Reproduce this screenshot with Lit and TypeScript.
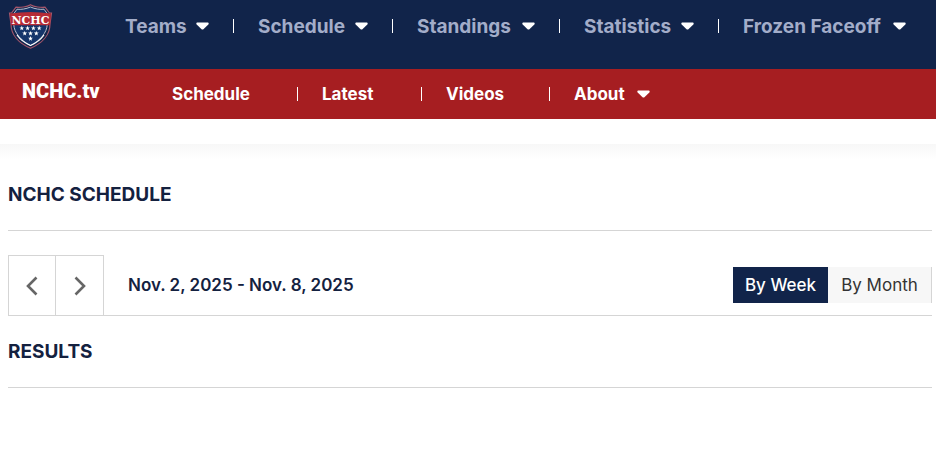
import { LitElement, html, css, svg, nothing } from "lit";
import { customElement, state } from "lit/decorators.js";

interface NavItem {
  label: string;
  menu: boolean;
}

const mainNav: NavItem[] = ["Teams", "Schedule", "Standings", "Statistics", "Frozen Faceoff"].map(
  (label) => ({ label, menu: true })
);

const tvNav: NavItem[] = [
  { label: "Schedule", menu: false },
  { label: "Latest", menu: false },
  { label: "Videos", menu: false },
  { label: "About", menu: true },
];

const caret = html`<svg class="caret" viewBox="0 0 13 8" aria-hidden="true">
  <path d="M1.6 0.4H11.4C12.7 0.4 13.1 1.6 12.3 2.4L7.7 6.9Q6.5 8 5.3 6.9L0.7 2.4C-0.1 1.6 0.3 0.4 1.6 0.4Z" fill="currentColor" />
</svg>`;

const stars: [number, number][] = [
  [13.8, 24.2], [19.6, 24.2], [25.4, 24.2], [31.2, 24.2],
  [16.7, 29.4], [22.5, 29.4], [28.3, 29.4],
  [22.5, 34.6],
];

const star = ([x, y]: [number, number]) => svg`<path
  transform="translate(${x} ${y})"
  d="M0 -2.5L0.7 -0.8H2.4L1 0.4L1.5 2.1L0 1.1L-1.5 2.1L-1 0.4L-2.4 -0.8H-0.7Z" fill="#fff" />`;

@customElement("app-root")
export class AppRoot extends LitElement {
  @state() private view: "week" | "month" = "week";

  static styles = css`
    :host {
      display: block;
      font-family: Inter, "Liberation Sans", sans-serif;
      color: #14213f;
      background: #fff;
    }
    a {
      color: inherit;
      text-decoration: none;
    }
    button {
      font: inherit;
      margin: 0;
      border: 0;
      border-radius: 0;
      cursor: pointer;
    }
    .top {
      display: flex;
      background: #11244a;
      height: 69px;
    }
    .brand {
      width: 101px;
      padding: 4px 0 0 8px;
      box-sizing: border-box;
      flex: none;
    }
    .shield {
      display: block;
      width: 45px;
      height: 45px;
    }
    .nav {
      display: grid;
      margin: 0;
      padding: 0;
      list-style: none;
    }
    .main {
      grid-template-columns: 133px 159px 167px 159px 187px;
      height: 52px;
      align-items: center;
      font-size: 19px;
      font-weight: 700;
      color: #a3adc9;
    }
    .tv {
      display: flex;
      align-items: center;
      background: #a61e21;
      height: 50px;
      color: #fff;
    }
    .wordmark {
      width: 148px;
      padding: 0 0 6px 22px;
      box-sizing: border-box;
      flex: none;
      font: 900 20px/24px Roboto, sans-serif;
    }
    .sub {
      grid-template-columns: 150px 124px 128px 100px;
      font-size: 17px;
      font-weight: 700;
    }
    .item {
      display: flex;
      align-items: center;
      height: 14px;
      padding-left: 24px;
      white-space: nowrap;
    }
    .item:not(:last-child) {
      border-right: 1px solid #fff;
    }
    .link {
      display: flex;
      flex: 1;
      align-items: center;
      justify-content: space-between;
    }
    .main .item:not(:last-child) .link {
      margin-right: 24px;
    }
    .caret {
      width: 13px;
      height: 8px;
      color: #fff;
    }
    .content {
      margin-top: 25px;
      padding: 38px 4px 0 8px;
      background: linear-gradient(#f7f7f7, #fff 16px);
    }
    .title {
      margin: 0;
      padding-bottom: 22px;
      border-bottom: 1px solid #d5d5d5;
      font-size: 19px;
      line-height: 26px;
      font-weight: 700;
    }
    .toolbar {
      display: flex;
      align-items: center;
      margin: 24px 0 23px;
      border-bottom: 1px solid #d5d5d5;
    }
    .steps {
      display: flex;
      border: 1px solid #d5d5d5;
      border-bottom: 0;
    }
    .step {
      display: grid;
      place-items: center;
      width: 46px;
      height: 59px;
      padding: 0;
      background: #fff;
      color: #666;
    }
    .step + .step {
      width: 48px;
      border-left: 1px solid #d5d5d5;
    }
    .chevron {
      width: 12px;
      height: 20px;
    }
    .range {
      flex: 1;
      margin: 0 24px;
      font-size: 17px;
      font-weight: 600;
    }
    .views {
      display: flex;
      border-right: 1px solid #d5d5d5;
    }
    .view {
      width: 103px;
      height: 36px;
      padding: 0;
      font-size: 17px;
      background: #f7f7f7;
      color: #333;
    }
    .week {
      width: 95px;
    }
    .view[aria-pressed="true"] {
      background: #11244a;
      color: #fff;
      font-weight: 500;
    }
  `;

  private renderNav(items: NavItem[], kind: string) {
    return html`<ul class="nav ${kind}">
      ${items.map(
        (item) => html`<li class="item">
          <a class="link" href="#">${item.label}${item.menu ? caret : nothing}</a>
        </li>`
      )}
    </ul>`;
  }

  private renderShield() {
    return html`<svg class="shield" viewBox="0 0 45 45" role="img" aria-label="NCHC">
      <path d="M22.5 0.8C26 3 33 3.7 37 3.2L41.5 9H43.5L42 20C42 31 34 39.5 22.5 44.2C11 39.5 3 31 3 20L1.5 9H3.5L8 3.2C12 3.7 19 3 22.5 0.8Z" fill="#11244a" stroke="#a4566b" stroke-width="1.2" />
      <path d="M22.5 3C27 5 32 5.7 36 5.2L39.5 10L39.3 20C39 29 32 36.5 22.5 41.5C13 36.5 6 29 5.7 20L5.5 10L9 5.2C13 5.7 18 5 22.5 3Z" fill="#15356a" stroke="#b8bdcd" stroke-width="1" />
      <path d="M9 31Q14 38 22.5 41.5Q31 38 36 31" fill="none" stroke="#fff" stroke-width="1.2" />
      <path d="M2 9.5Q22.5 6.5 43 9.5L42 21.3H3Z" fill="#b62b36" />
      <text x="22.5" y="19.6" text-anchor="middle" font-family="DejaVu Serif, serif" font-size="11" font-weight="700" fill="#fff">NCHC</text>
      ${stars.map(star)}
    </svg>`;
  }

  render() {
    return html`
      <header>
        <nav class="top" aria-label="Main">
          <a class="brand" href="#">${this.renderShield()}</a>
          ${this.renderNav(mainNav, "main")}
        </nav>
        <nav class="tv" aria-label="NCHC.tv">
          <a class="wordmark" href="#">NCHC.tv</a>
          ${this.renderNav(tvNav, "sub")}
        </nav>
      </header>
      <main class="content">
        <h1 class="title">NCHC SCHEDULE</h1>
        <div class="toolbar">
          <div class="steps">
            <button class="step" aria-label="Previous">
              <svg class="chevron" viewBox="0 0 12 20"><path d="M10.5 1.5L2 10L10.5 18.5" fill="none" stroke="currentColor" stroke-width="2.6" /></svg>
            </button>
            <button class="step" aria-label="Next">
              <svg class="chevron" viewBox="0 0 12 20"><path d="M1.5 1.5L10 10L1.5 18.5" fill="none" stroke="currentColor" stroke-width="2.6" /></svg>
            </button>
          </div>
          <div class="range">Nov. 2, 2025 - Nov. 8, 2025</div>
          <div class="views">
            <button class="view week" aria-pressed=${this.view === "week"} @click=${() => (this.view = "week")}>By Week</button>
            <button class="view" aria-pressed=${this.view === "month"} @click=${() => (this.view = "month")}>By Month</button>
          </div>
        </div>
        <h2 class="title">RESULTS</h2>
      </main>
    `;
  }
}
